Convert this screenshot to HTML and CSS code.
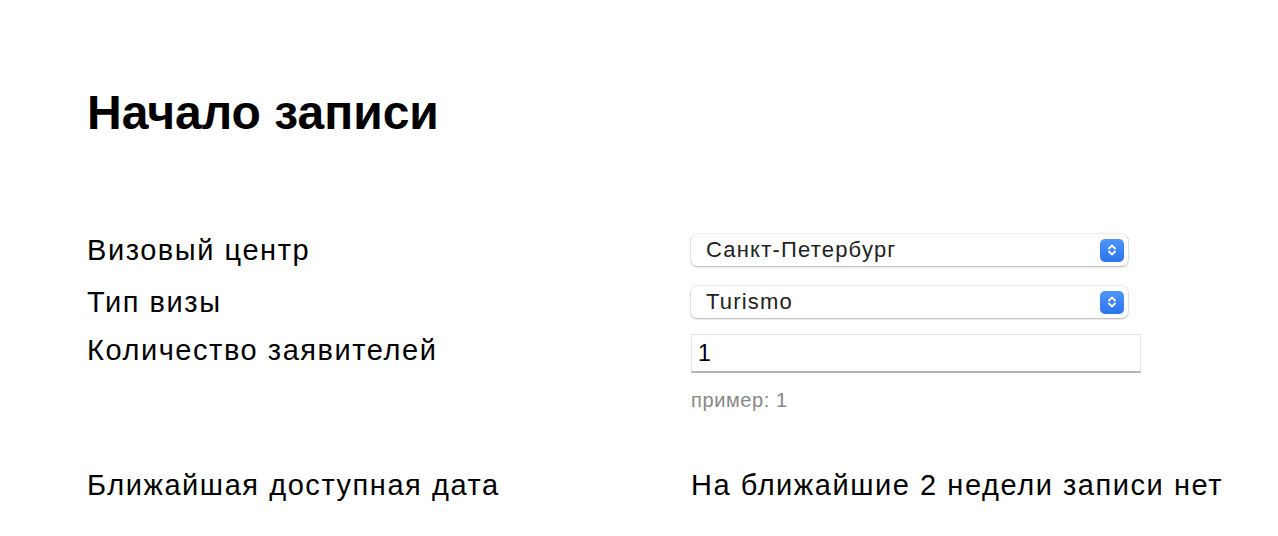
FILE: index.html
```html
<html>
<head>
    <link rel="stylesheet" href="styles.css">
</head>
<body>
<div class="page">
    <h1 class="title">Начало записи</h1>

    <div class="form">
        <div class="row row-first">
            <label class="label" for="center">Визовый центр</label>
            <div class="select">
                <span class="selectText">Санкт-Петербург</span>
                <span class="selectArrow">
                    <svg width="10" height="14" viewBox="0 0 10 14"><path d="M2 5.5 L5 2.5 L8 5.5 M2 8.5 L5 11.5 L8 8.5" fill="none" stroke="#fff" stroke-width="1.8" stroke-linecap="round" stroke-linejoin="round"/></svg>
                </span>
            </div>
        </div>
        <div class="row row-second">
            <label class="label" for="type">Тип визы</label>
            <div class="select">
                <span class="selectText">Turismo</span>
                <span class="selectArrow">
                    <svg width="10" height="14" viewBox="0 0 10 14"><path d="M2 5.5 L5 2.5 L8 5.5 M2 8.5 L5 11.5 L8 8.5" fill="none" stroke="#fff" stroke-width="1.8" stroke-linecap="round" stroke-linejoin="round"/></svg>
                </span>
            </div>
        </div>
        <div class="row">
            <label class="label" for="count">Количество заявителей</label>
            <div>
                <input class="textInput" type="text" id="count" value="1">
                <div class="hint">пример: 1</div>
            </div>
        </div>
        <div class="row row-date">
            <div class="label">Ближайшая доступная дата</div>
            <div class="value">На ближайшие 2 недели записи нет</div>
        </div>
    </div>
</div>
</body>
</html>
```

FILE: styles.css
```css
body {
    margin: 0;
    background: #ffffff;
    color: #000000;
    font-family: "Liberation Sans", Arial, sans-serif;
}
.page {
    padding: 86px 0 0 87px;
}
.title {
    font-size: 48px;
    font-weight: bold;
    line-height: 54px;
    margin: 0 0 94px 0;
}
.row {
    display: grid;
    grid-template-columns: 604px 1fr;
    align-items: start;
}
.row-first { margin-bottom: 20px; }
.row-second { margin-bottom: 16px; }
.row-date { margin-top: 57px; }
.label,
.value {
    font-size: 29px;
    line-height: 32px;
    letter-spacing: 1.55px;
}
.select {
    width: 437px;
    height: 32px;
    box-sizing: border-box;
    border-radius: 6px;
    background: #ffffff;
    box-shadow: 0 0 0 0.5px rgba(0,0,0,0.12), 0 1px 2px rgba(0,0,0,0.25);
    display: flex;
    align-items: center;
    justify-content: space-between;
    padding: 0 4px 0 15px;
}
.selectText {
    font-size: 22px;
    letter-spacing: 1.2px;
    color: #222222;
}
.selectArrow {
    width: 24px;
    height: 23px;
    border-radius: 5px;
    background: linear-gradient(#4f95f9, #2c73ee);
    display: flex;
    align-items: center;
    justify-content: center;
}
.textInput {
    width: 450px;
    height: 39px;
    box-sizing: border-box;
    border: 1px solid #e4e4e4;
    border-bottom: 2px solid #b5b5b5;
    padding: 0 6px;
    font-family: "Liberation Sans", Arial, sans-serif;
    font-size: 23px;
    color: #000000;
    outline: none;
    display: block;
}
.hint {
    margin-top: 15px;
    font-size: 20px;
    line-height: 24px;
    letter-spacing: 0.6px;
    color: #888888;
}
```
